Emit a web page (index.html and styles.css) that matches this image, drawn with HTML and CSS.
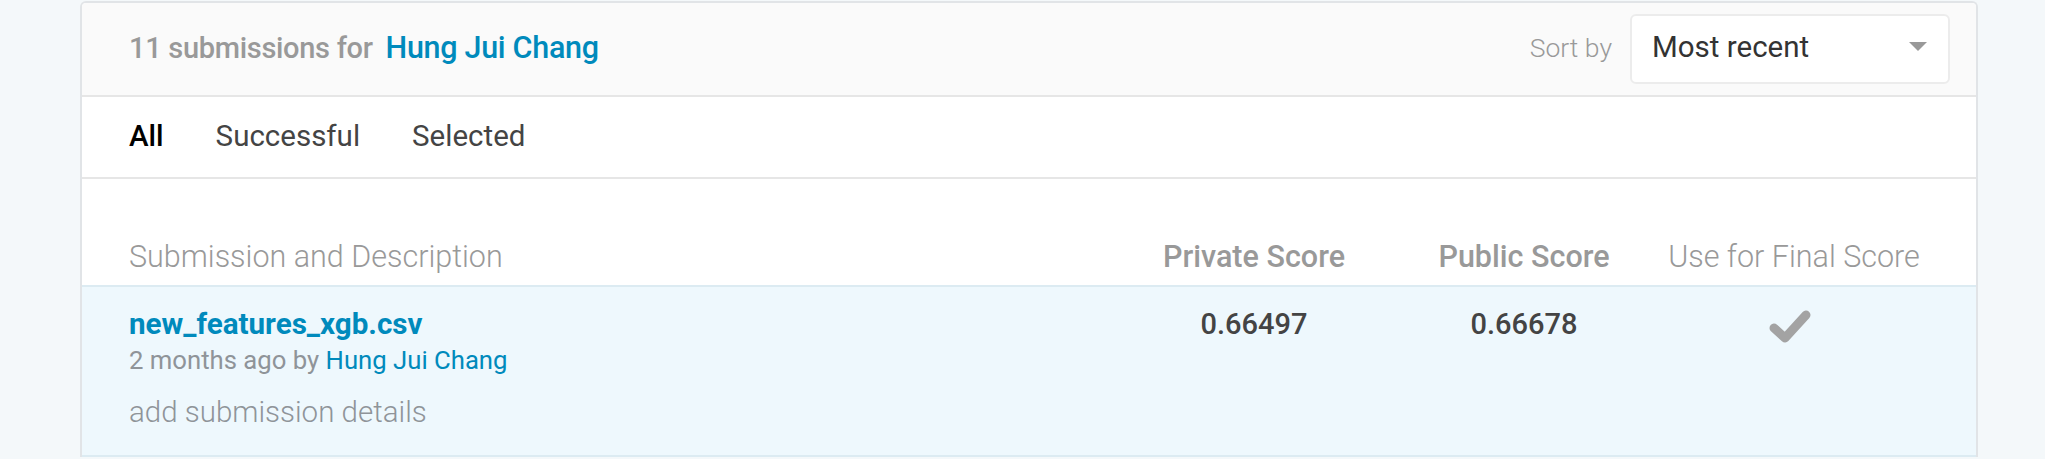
FILE: index.html
```html
<!DOCTYPE html>
<html>
<head>
<meta charset="utf-8">
<link rel="stylesheet" href="styles.css">
</head>
<body>
<div class="page">
  <div class="card">
    <div class="card-header">
      <div class="count">11 submissions for <a class="user">Hung Jui Chang</a></div>
      <div class="sort">
        <span class="sort-label">Sort by</span>
        <div class="select">
          <span>Most recent</span>
          <span class="caret"></span>
        </div>
      </div>
    </div>
    <div class="tabs">
      <span class="tab active">All</span>
      <span class="tab">Successful</span>
      <span class="tab">Selected</span>
    </div>
    <div class="table">
      <div class="thead">
        <div class="th th-desc">Submission and Description</div>
        <div class="th th-bold">Private Score</div>
        <div class="th th-bold">Public Score</div>
        <div class="th">Use for Final Score</div>
      </div>
      <div class="row">
        <div class="desc">
          <div class="file">new_features_xgb.csv</div>
          <div class="meta">2 months ago by <a class="author">Hung Jui Chang</a></div>
          <div class="details">add submission details</div>
        </div>
        <div class="score">0.66497</div>
        <div class="score">0.66678</div>
        <div class="check">
          <svg width="44" height="34" viewBox="0 0 44 34">
            <path d="M6 19 L17 29 L38 6" fill="none" stroke="#a3a3a3" stroke-width="9" stroke-linecap="round" stroke-linejoin="round"/>
          </svg>
        </div>
      </div>
    </div>
  </div>
</div>
</body>
</html>
```
FILE: styles.css
```css
html, body {
  margin: 0;
  padding: 0;
  background: #f4f8fa;
  font-family: Roboto, "Liberation Sans", sans-serif;
}
.page {
  padding: 1px 0 0 80px;
  width: 1898px;
}
.card {
  background: #fff;
  border: 2px solid #e1e4e7;
  border-bottom: none;
  border-radius: 6px 6px 0 0;
  overflow: hidden;
}
.card-header {
  height: 92px;
  background: #fafafa;
  border-bottom: 2px solid #e6e6e6;
  display: flex;
  align-items: center;
  justify-content: space-between;
  padding: 0 26px 0 47px;
}
.count {
  font-size: 29px;
  font-weight: 500;
  color: #999;
  letter-spacing: -0.3px;
  padding-bottom: 4px;
}
.user {
  color: #008abc;
  margin-left: 6px;
  font-size: 30.5px;
}
.sort {
  display: flex;
  align-items: center;
}
.sort-label {
  font-size: 26.5px;
  color: #999;
  font-weight: 300;
  margin-right: 18px;
  padding-bottom: 4px;
}
.select {
  width: 320px;
  height: 70px;
  box-sizing: border-box;
  border: 2px solid #ececec;
  border-radius: 6px;
  background: #fff;
  display: flex;
  align-items: center;
  justify-content: space-between;
  padding: 0 21px 0 20px;
  font-size: 29.5px;
  color: #333;
}
.select span:first-child {
  padding-bottom: 4px;
}
.caret {
  width: 0;
  height: 0;
  border-left: 9px solid transparent;
  border-right: 9px solid transparent;
  border-top: 9px solid #999;
  margin-top: -6px;
}
.tabs {
  height: 80px;
  border-bottom: 2px solid #e6e6e6;
  display: flex;
  align-items: center;
  padding-left: 47px;
}
.tab {
  font-size: 29.5px;
  color: #444;
  margin-right: 52px;
  padding-bottom: 2px;
}
.tab.active {
  color: #000;
  font-weight: 500;
}
.table {
  padding-top: 42px;
}
.thead, .row {
  display: grid;
  grid-template-columns: 1fr 270px 270px 270px;
  padding: 0 47px;
}
.thead {
  height: 64px;
  align-items: center;
  border-bottom: 2px solid #dcebf2;
}
.th {
  font-size: 30.5px;
  color: #999;
  text-align: center;
  font-weight: 300;
  padding-top: 6px;
}
.th-desc {
  text-align: left;
  font-weight: 300;
}
.th-bold {
  font-weight: 500;
}
.row {
  background: #eef8fd;
  height: 168px;
  border-bottom: 2px solid #dcebf2;
  align-items: start;
}
.desc {
  padding-top: 19px;
}
.file {
  font-size: 29.6px;
  font-weight: 700;
  color: #008abc;
  line-height: 36px;
}
.meta {
  font-size: 25.7px;
  color: #8f9499;
  line-height: 36px;
}
.author {
  color: #008abc;
}
.details {
  margin-top: 16px;
  font-size: 29.5px;
  color: #8f9499;
  line-height: 36px;
  font-weight: 300;
}
.score {
  padding-top: 19px;
  font-size: 29px;
  font-weight: 500;
  color: #444;
  text-align: center;
  line-height: 36px;
}
.check {
  padding-top: 22px;
  text-align: center;
  padding-right: 8px;
}
```
